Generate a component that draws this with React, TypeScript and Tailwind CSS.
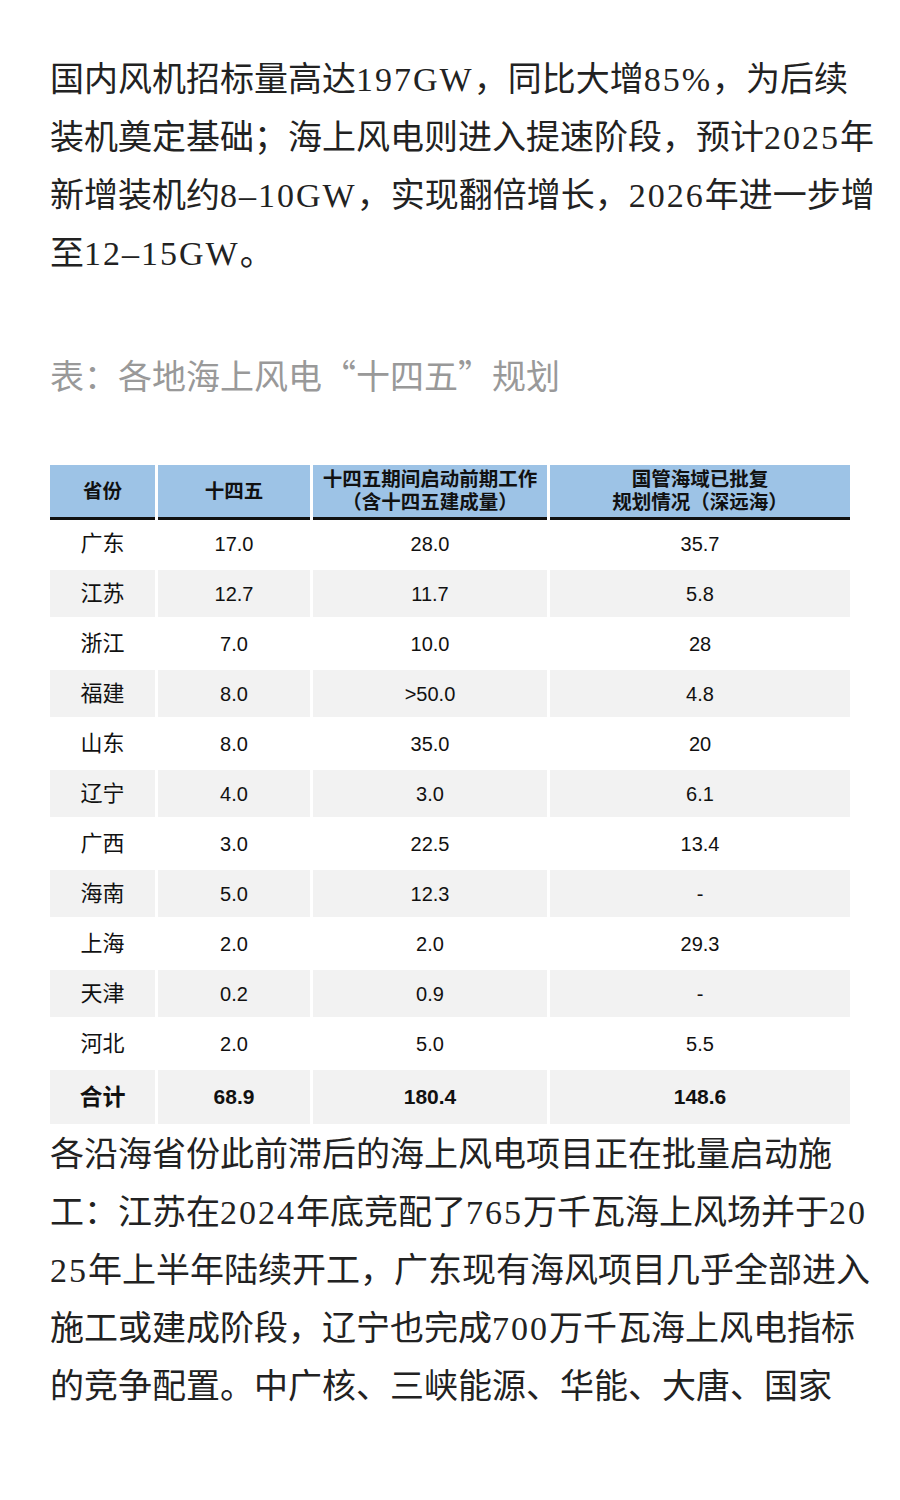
const ROWS: { name: string; a: string; b: string; c: string }[] = [
  { name: "广东", a: "17.0", b: "28.0", c: "35.7" },
  { name: "江苏", a: "12.7", b: "11.7", c: "5.8" },
  { name: "浙江", a: "7.0", b: "10.0", c: "28" },
  { name: "福建", a: "8.0", b: ">50.0", c: "4.8" },
  { name: "山东", a: "8.0", b: "35.0", c: "20" },
  { name: "辽宁", a: "4.0", b: "3.0", c: "6.1" },
  { name: "广西", a: "3.0", b: "22.5", c: "13.4" },
  { name: "海南", a: "5.0", b: "12.3", c: "-" },
  { name: "上海", a: "2.0", b: "2.0", c: "29.3" },
  { name: "天津", a: "0.2", b: "0.9", c: "-" },
  { name: "河北", a: "2.0", b: "5.0", c: "5.5" },
];

const WIDTHS = ["w-[105px]", "w-[152px]", "w-[234px]", "w-[300px]"];

// latin runs in the body text sit a little wider than Liberation Serif
function L({ children }: { children: React.ReactNode }) {
  return <span className="tracking-[2px]">{children}</span>;
}

function HeadCell({ w, children }: { w: string; children: React.ReactNode }) {
  return (
    <div
      className={`${w} h-[55px] bg-[#9dc3e6] border-b-[3px] border-[#111] flex items-center justify-center text-center font-bold text-[19.5px] leading-[23px] text-[#111]`}
    >
      {children}
    </div>
  );
}

function Row({ cells, gray, total }: { cells: string[]; gray: boolean; total?: boolean }) {
  return (
    <div className={`flex gap-[3px] ${total ? "h-[54px]" : "h-[47px]"}`}>
      {cells.map((t, i) => (
        <div
          key={i}
          className={`${WIDTHS[i]} flex items-center justify-center text-[#111] ${
            gray ? "bg-[#f2f2f2]" : "bg-white"
          } ${total ? "font-bold" : ""} ${
            i === 0 ? (total ? "text-[23px]" : "text-[22px]") : total ? "text-[21px]" : "text-[20px]"
          }`}
        >
          {t}
        </div>
      ))}
    </div>
  );
}

export default function App() {
  return (
    <div className="w-[900px] min-h-[1500px] bg-white pt-[51px] font-['Liberation_Serif','Noto_Sans_CJK_SC',serif]">
      {/* lead paragraph */}
      <p className="pl-[50px] pr-[10px] text-[34px] leading-[58px] text-[#222] break-all">
        国内风机招标量高达<L>197GW</L>，同比大增<L>85%</L>，为后续
        <br />
        装机奠定基础；海上风电则进入提速阶段，预计<L>2025</L>年
        <br />
        新增装机约<L>8–10GW</L>，实现翻倍增长，<L>2026</L>年进一步增
        <br />
        至<L>12–15GW</L>。
      </p>

      {/* caption */}
      <p className="mt-[63px] pl-[50px] text-[34px] leading-[58px] text-[#999] font-['Noto_Sans_CJK_SC',sans-serif]">
        表：各地海上风电“十四五”规划
      </p>

      {/* table */}
      <div className="mt-[61px] ml-[50px] w-[800px] font-['Liberation_Sans','Noto_Sans_CJK_SC',sans-serif]">
        <div className="flex gap-[3px]">
          <HeadCell w={WIDTHS[0]}>省份</HeadCell>
          <HeadCell w={WIDTHS[1]}>十四五</HeadCell>
          <HeadCell w={WIDTHS[2]}>
            十四五期间启动前期工作
            <br />
            （含十四五建成量）
          </HeadCell>
          <HeadCell w={WIDTHS[3]}>
            国管海域已批复
            <br />
            规划情况（深远海）
          </HeadCell>
        </div>
        <div className="flex flex-col gap-[3px]">
          {ROWS.map((r, i) => (
            <Row key={r.name} cells={[r.name, r.a, r.b, r.c]} gray={i % 2 === 1} />
          ))}
          <Row cells={["合计", "68.9", "180.4", "148.6"]} gray total />
        </div>
      </div>

      {/* following paragraph */}
      <p className="mt-[2px] pl-[50px] pr-[10px] text-[34px] leading-[58px] text-[#222] break-all">
        各沿海省份此前滞后的海上风电项目正在批量启动施
        <br />
        工：江苏在<L>2024</L>年底竞配了<L>765</L>万千瓦海上风场并于<L>20</L>
        <br />
        <L>25</L>年上半年陆续开工，广东现有海风项目几乎全部进入
        <br />
        施工或建成阶段，辽宁也完成<L>700</L>万千瓦海上风电指标
        <br />
        的竞争配置。中广核、三峡能源、华能、大唐、国家
      </p>
    </div>
  );
}
